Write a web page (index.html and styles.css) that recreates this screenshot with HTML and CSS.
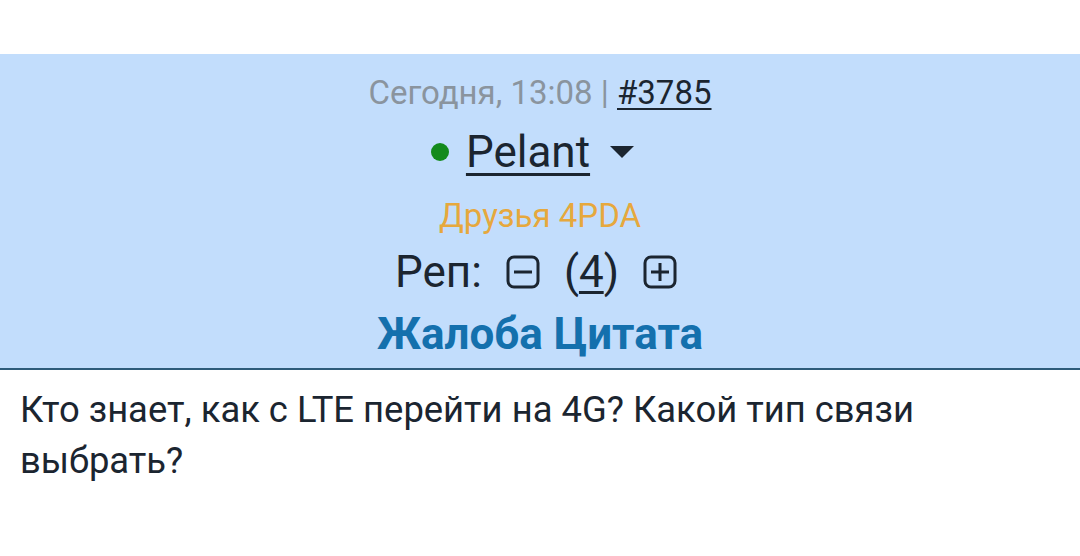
FILE: index.html
```html
<!DOCTYPE html>
<html lang="ru">
<head>
<meta charset="utf-8">
<link rel="stylesheet" href="styles.css">
</head>
<body>
<div class="top"></div>
<div class="post-head">
  <div class="meta">Сегодня, 13:08 | <a class="num" href="#">#3785</a></div>
  <div class="user">
    <span class="dot"></span>
    <a class="nick" href="#">Pelant</a>
    <svg class="caret" width="24" height="12" viewBox="0 0 24 12"><path d="M0 0H24L12 12Z" fill="#1b2530"/></svg>
  </div>
  <div class="group">Друзья 4PDA</div>
  <div class="rep">
    <span>Реп:</span>
    <svg class="box" width="34" height="34" viewBox="0 0 34 34"><rect x="2" y="2" width="30" height="30" rx="6" fill="none" stroke="#1b2530" stroke-width="3"/><path d="M8 17H26" stroke="#1b2530" stroke-width="3"/></svg>
    <span class="count">(<u>4</u>)</span>
    <svg class="box" width="34" height="34" viewBox="0 0 34 34"><rect x="2" y="2" width="30" height="30" rx="6" fill="none" stroke="#1b2530" stroke-width="3"/><path d="M8 17H26M17 8V26" stroke="#1b2530" stroke-width="3"/></svg>
  </div>
  <div class="actions"><a href="#">Жалоба</a> <a href="#">Цитата</a></div>
</div>
<div class="post-body">Кто знает, как с LTE перейти на 4G? Какой тип связи выбрать?</div>
</body>
</html>
```
FILE: styles.css
```css
html, body { margin: 0; padding: 0; background: #fff; }
body { font-family: Roboto, "Noto Sans", sans-serif; color: #1b2530; }
.top { height: 54px; background: #fff; }
.post-head {
  background: #c2ddfc;
  border-bottom: 2px solid #2d5b7a;
  text-align: center;
  padding: 19px 0 9px;
}
.meta { font-size: 33px; color: #8a949e; line-height: 40px; }
.meta .num { color: #1b2530; text-decoration-thickness: 2px; text-underline-offset: 4px; }
.user { display: flex; justify-content: center; align-items: center; gap: 17px; margin-top: 13px; height: 52px; padding-right: 15px; }
.dot { width: 18px; height: 18px; border-radius: 50%; background: #138a1c; }
.nick { font-size: 44px; line-height: 52px; color: #1b2530; text-decoration-thickness: 3px; text-underline-offset: 6px; }
.caret { margin-left: 3px; }
.group { font-size: 33px; color: #e6a83d; margin-top: 18px; line-height: 40px; }
.rep { display: flex; justify-content: center; align-items: center; gap: 24px; font-size: 44px; margin-top: 12px; height: 48px; padding-right: 8px; }
.box { width: 34px; height: 34px; }
.count u { text-decoration-thickness: 3px; text-underline-offset: 4px; }
.actions { font-size: 44px; font-weight: bold; margin-top: 13px; line-height: 50px; }
.actions a { color: #1470ad; text-decoration: none; }
.post-body { font-size: 36.4px; line-height: 51px; padding: 14px 20px 0 20px; width: 920px; }
```
